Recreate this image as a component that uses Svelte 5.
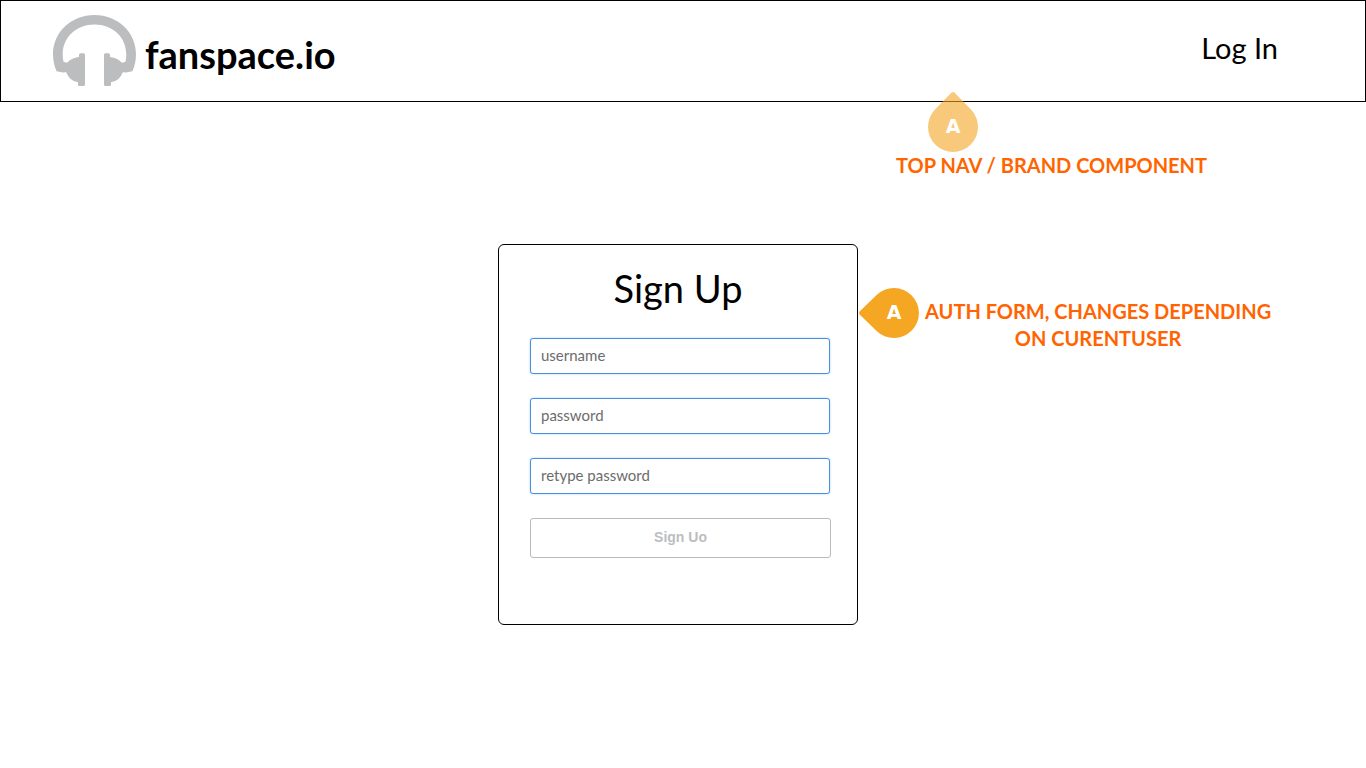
<script>
  const fields = [
    { id: 'username', label: 'username', type: 'text' },
    { id: 'password', label: 'password', type: 'password' },
    { id: 'retype', label: 'retype password', type: 'password' }
  ];
</script>

<header class="nav">
  <a class="brand" href="#home">
    <svg class="logo" viewBox="0 0 83 71" aria-hidden="true">
      <path d="M3.6 56.2C1.2 51 0 45 0 39.5C0 17 18.5 0 41.5 0S83 17 83 39.5C83 45 81.8 51 79.4 56.2L73 57.4L69.8 57.2Q66.5 66 58 67.3V69.5Q58 71 56.5 71H52.5Q51 71 51 69.5V40Q51 38.3 52.5 38.3H55.5Q57 38.3 57 40V42Q65 43 69 47.8L72.5 46.8Q73.3 43 73.3 39.5C73.3 22 59.5 9.5 41.5 9.5S9.7 22 9.7 39.5Q9.7 43 10.5 46.8L14 47.8Q18 43 26 42V40Q26 38.3 27.5 38.3H30.5Q32 38.3 32 40V69.5Q32 71 30.5 71H26.5Q25 71 25 69.5V67.3Q16.5 66 13.2 57.2L10 57.4Z" />
    </svg>
    <span class="name">fanspace.io</span>
  </a>
  <a class="login" href="#login">Log In</a>
  <aside class="note note-nav">
    <svg class="pin up" viewBox="0 0 50 60" aria-hidden="true">
      <path d="M23.6 .6Q25 -.4 26.4 .6L43 17.6A25 25 0 1 1 7 17.6Z" />
    </svg>
    <span class="letter">A</span>
    <p>TOP NAV / BRAND COMPONENT</p>
  </aside>
</header>

<main>
  <section class="card">
    <h1>Sign Up</h1>
    <form>
      {#each fields as field}
        <input id={field.id} type={field.type} placeholder={field.label} aria-label={field.label} />
      {/each}
      <button type="button">Sign Uo</button>
    </form>
    <aside class="note note-form">
      <div class="marker">
        <svg class="pin" viewBox="0 0 60 50" aria-hidden="true">
          <path d="M.6 23.6Q-.4 25 .6 26.4L17.6 43A25 25 0 1 0 17.6 7Z" />
        </svg>
        <span class="letter">A</span>
      </div>
      <p>AUTH FORM, CHANGES DEPENDING<br />ON CURENTUSER</p>
    </aside>
  </section>
</main>

<style>
  :global(body) {
    background: #fff;
    color: #000;
    font-family: Lato, "Liberation Sans", sans-serif;
  }
  .nav {
    position: relative;
    display: flex;
    align-items: flex-start;
    justify-content: space-between;
    box-sizing: border-box;
    padding: 14px 87px 15px 52px;
    border: 1px solid #000;
  }
  a {
    color: inherit;
    text-decoration: none;
  }
  .brand {
    display: flex;
    align-items: center;
    gap: 9px;
  }
  .logo {
    width: 83px;
    height: 71px;
    fill: #bcbdbf;
  }
  .name {
    font-size: 38px;
    line-height: 40px;
    font-weight: 700;
    padding-top: 6px;
  }
  .login {
    padding-top: 13px;
    font-size: 29px;
    line-height: 40px;
  }
  .note p {
    margin: 0;
    color: #ff6400;
    font-size: 20px;
    line-height: 27px;
    font-weight: 700;
    text-align: center;
    white-space: nowrap;
  }
  .pin {
    display: block;
    width: 60px;
    height: 50px;
    fill: #f5a623;
  }
  .pin.up {
    width: 50px;
    height: 60px;
    margin-left: 32px;
    opacity: 0.6;
  }
  .letter {
    position: absolute;
    top: 0;
    left: 10px;
    width: 50px;
    color: #fff;
    font-family: "DejaVu Sans", sans-serif;
    font-size: 19px;
    line-height: 48px;
    font-weight: 700;
    text-align: center;
  }
  .note-nav {
    position: absolute;
    top: 91px;
    right: 158px;
  }
  .note-nav .letter {
    top: 10px;
    left: 32px;
  }
  main {
    display: flex;
    justify-content: center;
    padding: 142px 10px 32px 0;
  }
  .card {
    position: relative;
    box-sizing: border-box;
    width: 360px;
    padding: 19px 0 66px;
    border: 1px solid #000;
    border-radius: 6px;
  }
  h1 {
    margin: 0 0 25px;
    font-size: 38px;
    line-height: 49px;
    font-weight: 400;
    text-align: center;
  }
  form {
    display: flex;
    flex-direction: column;
    gap: 24px;
    padding: 0 26px 0 31px;
  }
  input {
    box-sizing: border-box;
    width: 300px;
    height: 36px;
    padding: 0 10px 2px;
    border: 1px solid #4a90e2;
    border-radius: 3px;
    box-shadow: 0 0 2px rgba(74, 144, 226, 0.5);
    background: #fff;
    font: 15px/20px Lato, "Liberation Sans", sans-serif;
  }
  input::placeholder {
    color: #6c6c6c;
    opacity: 1;
  }
  button {
    height: 40px;
    padding: 0 6px 2px;
    border: 1px solid #b8babf;
    border-radius: 3px;
    background: #fff;
    color: #bcbdbf;
    font: bold 14px/20px "Liberation Sans", sans-serif;
  }
  .note-form {
    position: absolute;
    top: 43px;
    left: 360px;
    display: flex;
    gap: 6px;
  }
  .marker {
    position: relative;
  }
  .note-form p {
    padding-top: 10px;
  }
</style>
